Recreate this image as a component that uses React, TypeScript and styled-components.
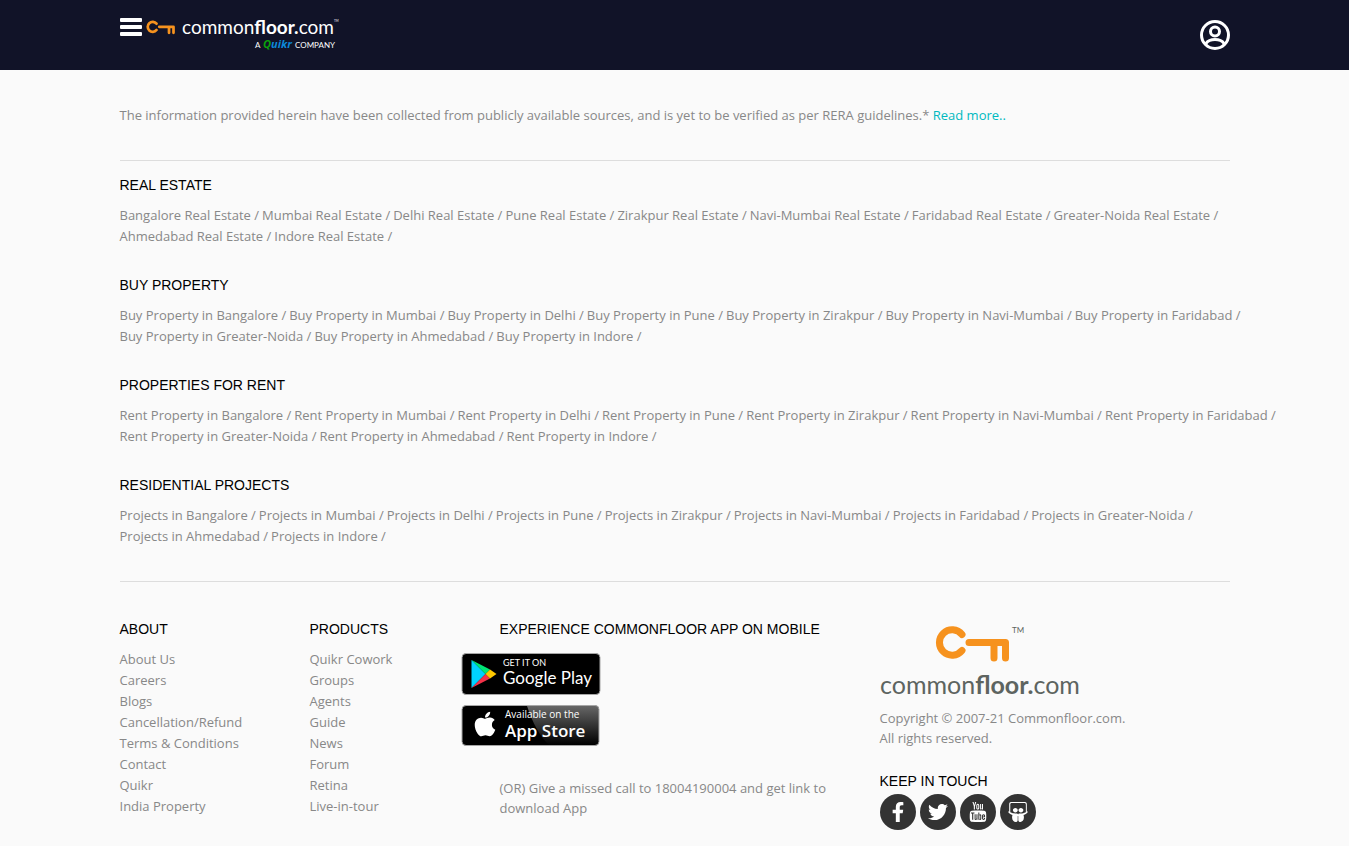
import React from "react";
import styled, { createGlobalStyle } from "styled-components";
import { FaFacebookF, FaTwitter, FaSlideshare, FaApple } from "react-icons/fa";
import { TfiYoutube } from "react-icons/tfi";

const bodyFont = '"Open Sans", "Noto Sans", sans-serif';
const headFont = '"Liberation Sans", Arial, sans-serif';

const GlobalStyle = createGlobalStyle`
  *, *::before, *::after { box-sizing: border-box; }
  body { margin: 0; background: #fafafa; color: #888; font: 13px/21px ${bodyFont}; }
  a { color: inherit; text-decoration: none; }
  a:hover { text-decoration: underline; }
  ul, p, h3 { margin: 0; padding: 0; list-style: none; font-weight: 400; }
  button { border: 0; padding: 0; background: none; cursor: pointer; }
`;

const TopBar = styled.header`
  background: #111328;
  height: 70px;
`;

const Container = styled.div`
  max-width: 1140px;
  margin: 0 auto;
  padding: 0 15px;
`;

const BarRow = styled(Container)`
  display: flex;
  align-items: flex-start;
  padding-top: 14px;
`;

const MenuButton = styled.button`
  display: flex;
  flex-direction: column;
  gap: 3px;
  width: 22px;
  margin-top: 4px;
  margin-right: 4px;
`;

const MenuLine = styled.span`
  width: 22px;
  height: 4px;
  border-radius: 1px;
  background: #fff;
`;

const BrandLink = styled.a`
  display: block;
  line-height: 0;
`;

const AccountButton = styled.button`
  margin: 6px 0 0 auto;
  line-height: 0;
`;

const Notice = styled.p`
  padding: 35px 0 34px;
  border-bottom: 1px solid #ddd;
`;

const MoreLink = styled.a`
  color: #00b9bf;
`;

const Directory = styled.section`
  padding: 14px 0 26px;
  border-bottom: 1px solid #ddd;
`;

const LinkGroup = styled.section`
  margin-bottom: 28px;
  &:last-child { margin-bottom: 8px; }
`;

const Heading = styled.h3`
  margin-bottom: 9px;
  color: #000;
  font: 14px/21px ${headFont};
`;

const InlineLinks = styled.ul`
  display: flex;
  flex-wrap: wrap;
  column-gap: 3px;
  margin-right: -60px;
`;

const Footer = styled.footer`
  display: grid;
  grid-template-columns: 2fr 2fr 4fr 4fr;
  margin-right: -30px;
  padding-top: 37px;
`;

const Column = styled.div`
  padding-right: 30px;
`;

const StoreBadges = styled.div`
  display: flex;
  flex-direction: column;
  gap: 10px;
  margin: 13px 0 31px -39px;
  line-height: 0;
`;

const FooterText = styled.p`
  line-height: 20px;
`;

const LogoLink = styled.a`
  display: block;
  margin-top: 5px;
  margin-bottom: 10px;
  line-height: 0;
`;

const TouchHeading = styled(Heading)`
  margin: 23px 0 2px;
`;

const Socials = styled.ul`
  display: flex;
  gap: 4px;
  padding-bottom: 16px;
`;

const SocialLink = styled.a`
  display: flex;
  align-items: center;
  justify-content: center;
  width: 36px;
  height: 36px;
  border-radius: 50%;
  background: #333;
  color: #fff;
  font-size: 20px;
`;

const cities = ["Bangalore", "Mumbai", "Delhi", "Pune", "Zirakpur", "Navi-Mumbai", "Faridabad", "Greater-Noida", "Ahmedabad", "Indore"];

const groups = [
  { title: "REAL ESTATE", label: (c: string) => `${c} Real Estate` },
  { title: "BUY PROPERTY", label: (c: string) => `Buy Property in ${c}` },
  { title: "PROPERTIES FOR RENT", label: (c: string) => `Rent Property in ${c}` },
  { title: "RESIDENTIAL PROJECTS", label: (c: string) => `Projects in ${c}` },
];

const about = ["About Us", "Careers", "Blogs", "Cancellation/Refund", "Terms & Conditions", "Contact", "Quikr", "India Property"];
const products = ["Quikr Cowork", "Groups", "Agents", "Guide", "News", "Forum", "Retina", "Live-in-tour"];

const socials = [
  { name: "Facebook", icon: <FaFacebookF /> },
  { name: "Twitter", icon: <FaTwitter /> },
  { name: "YouTube", icon: <TfiYoutube /> },
  { name: "SlideShare", icon: <FaSlideshare /> },
];

const KeyShape = () => (
  <g fill="none" stroke="#f6921e" strokeLinecap="round" strokeLinejoin="round">
    <path d="M27 9.500A12.700 12.700 0 1 0 27 25.500" strokeWidth="7" />
    <path d="M34 17.500H70.500V33M59 19V33" strokeWidth="7" />
  </g>
);

const HeaderLogo = () => (
  <svg width="200" height="40" viewBox="0 0 200 40" role="img" aria-label="CommonFloor, a Quikr company" fontFamily="Lato, sans-serif">
    <g transform="translate(0 6) scale(.39)"><KeyShape /></g>
    <text x="36" y="20" fill="#fff" fontSize="19">common<tspan fontWeight="700">floor.</tspan>com</text>
    <text x="188" y="8" fill="#fff" fontSize="3">TM</text>
    <text x="109" y="34" fill="#fff" fontSize="8">A</text>
    <text x="117" y="34" fontSize="11" fontWeight="700" fontStyle="italic" fontFamily="Open Sans, sans-serif" fill="#0c88d8"><tspan fill="#0ba30b">Q</tspan>uikr</text>
    <text x="149" y="34" fill="#fff" fontSize="8">COMPANY</text>
  </svg>
);

const FooterLogo = () => (
  <svg width="204" height="74" viewBox="0 0 204 74" role="img" aria-label="CommonFloor" fontFamily="Lato, sans-serif">
    <g transform="translate(55 1)"><KeyShape /></g>
    <text x="132" y="9" fill="#5d6460" fontSize="8">TM</text>
    <text x="0" y="70" fill="#5d6460" fontSize="25">common<tspan fontWeight="700">floor.</tspan>com</text>
  </svg>
);

const AccountIcon = () => (
  <svg width="30" height="30" viewBox="0 0 30 30" fill="none" stroke="#fff" strokeWidth="3">
    <circle cx="15" cy="15" r="13.500" />
    <circle cx="15" cy="11.500" r="4.500" />
    <path d="M6 24.500V23.500C8 20.500 11.500 19.500 15 19.500s7 1 9 4V24.500" />
  </svg>
);

const GooglePlayBadge = () => (
  <svg width="140" height="42" viewBox="0 0 140 42" fontFamily="Lato, sans-serif">
    <rect x="1" y=".5" width="138" height="41" rx="4" fill="#000" stroke="#a6a6a6" />
    <path d="M10.500 7V35L24.500 21Z" fill="#00d2ff" />
    <path d="M10.500 7L29 16.500 24.500 21Z" fill="#00e676" />
    <path d="M10.500 35L29 25.500 24.500 21Z" fill="#f43249" />
    <path d="M29 16.500L35.500 21 29 25.500 24.500 21Z" fill="#ffc800" />
    <text x="42" y="13" fill="#fff" fontSize="9">GET IT ON</text>
    <text x="42" y="31" fill="#fff" fontSize="17">Google Play</text>
  </svg>
);

const AppStoreBadge = () => (
  <svg width="140" height="42" viewBox="0 0 140 42" fontFamily="Open Sans, sans-serif">
    <defs>
      <linearGradient id="gloss" x1="0" y1="0" x2="0" y2="1">
        <stop offset="0" stopColor="#666" />
        <stop offset="1" stopColor="#000" />
      </linearGradient>
    </defs>
    <rect x="1" y=".5" width="137" height="40" rx="4" fill="#000" />
    <path d="M66 1H134Q138 1 138 5V36Q138 40 134 40H88Q75 28 66 1Z" fill="url(#gloss)" />
    <rect x="1" y=".5" width="137" height="40" rx="4" fill="none" stroke="#a6a6a6" />
    <FaApple x="10" y="5" size={28} color="#fff" />
    <text x="44" y="13" fill="#fff" fontSize="10">Available on the</text>
    <text x="44" y="32" fill="#fff" fontSize="17" fontWeight="600">App Store</text>
  </svg>
);

const LinkList = ({ items }: { items: string[] }) => (
  <ul>
    {items.map((item) => (
      <li key={item}><a href="#">{item}</a></li>
    ))}
  </ul>
);

export default function App() {
  return (
    <>
      <GlobalStyle />
      <TopBar>
        <BarRow>
          <MenuButton aria-label="Menu">
            <MenuLine /><MenuLine /><MenuLine />
          </MenuButton>
          <BrandLink href="#"><HeaderLogo /></BrandLink>
          <AccountButton aria-label="Account"><AccountIcon /></AccountButton>
        </BarRow>
      </TopBar>
      <Container as="main">
        <Notice>
          The information provided herein have been collected from publicly available sources, and is yet to be verified as per RERA guidelines.* <MoreLink href="#">Read more..</MoreLink>
        </Notice>
        <Directory>
          {groups.map((g) => (
            <LinkGroup key={g.title}>
              <Heading>{g.title}</Heading>
              <InlineLinks>
                {cities.map((c) => (
                  <li key={c}><a href="#">{g.label(c)}</a> /</li>
                ))}
              </InlineLinks>
            </LinkGroup>
          ))}
        </Directory>
        <Footer>
          <Column><Heading>ABOUT</Heading><LinkList items={about} /></Column>
          <Column><Heading>PRODUCTS</Heading><LinkList items={products} /></Column>
          <Column>
            <Heading>EXPERIENCE COMMONFLOOR APP ON MOBILE</Heading>
            <StoreBadges>
              <a href="#" aria-label="Get it on Google Play"><GooglePlayBadge /></a>
              <a href="#" aria-label="Available on the App Store"><AppStoreBadge /></a>
            </StoreBadges>
            <FooterText>(OR) Give a missed call to 18004190004 and get link to download App</FooterText>
          </Column>
          <Column>
            <LogoLink href="#"><FooterLogo /></LogoLink>
            <FooterText>Copyright © 2007-21 Commonfloor.com.<br />All rights reserved.</FooterText>
            <TouchHeading>KEEP IN TOUCH</TouchHeading>
            <Socials>
              {socials.map((s) => (
                <li key={s.name}><SocialLink href="#" aria-label={s.name}>{s.icon}</SocialLink></li>
              ))}
            </Socials>
          </Column>
        </Footer>
      </Container>
    </>
  );
}
